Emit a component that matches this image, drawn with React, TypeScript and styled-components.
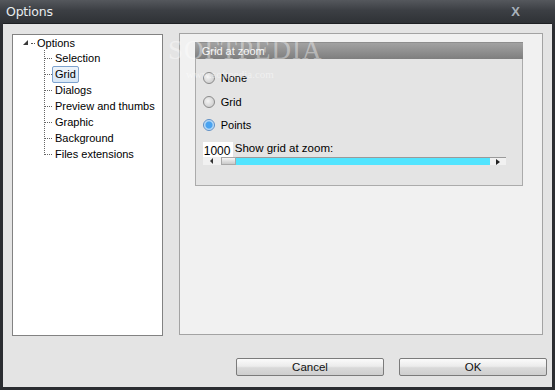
import styled, { createGlobalStyle } from "styled-components";

const Global = createGlobalStyle`
  html, body { margin: 0; padding: 0; }
  body { width: 555px; height: 390px; overflow: hidden; background: #2c2e32; }
`;

const Window = styled.div`
  position: relative;
  width: 555px;
  height: 390px;
  display: flex;
  flex-direction: column;
  background: linear-gradient(#3a3d42, #2b2d31 30px, #2b2d31);
  font-family: "Liberation Sans", Arial, sans-serif;
  font-size: 11px;
  color: #000;
  box-sizing: border-box;
`;

const TitleBar = styled.div`
  height: 23px;
  display: flex;
  align-items: center;
  justify-content: space-between;
  padding: 0 35px 1px 6px;
  background: linear-gradient(#55585d, #3c3f44 45%, #2f3236);
  box-sizing: border-box;
`;

const Title = styled.span`
  font-family: "DejaVu Sans", "Liberation Sans", sans-serif;
  font-size: 12.5px;
  color: #e8ecef;
  letter-spacing: -0.2px;
`;

const Close = styled.span`
  font-family: "Liberation Sans", Arial, sans-serif;
  font-weight: bold;
  font-size: 13px;
  color: #a9b2bb;
`;

const Body = styled.div`
  flex: 1;
  margin: 0 3px 3px 3px;
  background: #e4e4e4;
  border-top: 1px solid #1e2023;
  display: flex;
  flex-direction: column;
  padding: 9px 9px 0 9px;
  box-sizing: border-box;
`;

const Main = styled.div`
  display: flex;
  gap: 16px;
  align-items: flex-start;
`;

const Tree = styled.div`
  width: 151px;
  height: 302px;
  margin-top: 1px;
  background: #fff;
  border: 1px solid #828282;
  box-sizing: border-box;
  padding: 0 0 0 9px;
`;

const Root = styled.div`
  display: flex;
  align-items: center;
  height: 16px;
`;

const Expander = styled.span`
  width: 0;
  height: 0;
  border-left: 5px solid transparent;
  border-bottom: 5px solid #3a3a3a;
  margin: 0 3px 2px 1px;
`;

const Dot = styled.span`
  width: 4px;
  border-top: 1px dotted #555;
  margin-right: 2px;
`;

const Children = styled.div`
  margin-left: 22px;
  border-left: 1px dotted #666;
  height: 105px;
  margin-top: -1px;
`;

const Item = styled.div`
  display: flex;
  align-items: center;
  height: 16px;
`;

const Line = styled.span`
  width: 7px;
  border-top: 1px dotted #666;
`;

const Label = styled.span<{ $sel?: boolean }>`
  padding: 0 2px;
  height: 15px;
  line-height: 15px;
  border: 1px solid ${(p) => (p.$sel ? "#7da2ce" : "transparent")};
  border-radius: 2px;
  background: ${(p) => (p.$sel ? "linear-gradient(#eef4fb, #d6e6f6)" : "transparent")};
  white-space: nowrap;
`;

const Panel = styled.div`
  width: 365px;
  height: 302px;
  background: #f1f1f1;
  border: 1px solid #a3a3a3;
  box-sizing: border-box;
  padding: 8px 0 0 15px;
`;

const Group = styled.div`
  width: 328px;
  height: 144px;
  background: #e4e4e4;
  border: 1px solid #ababab;
  border-top: none;
  box-sizing: border-box;
  display: flex;
  flex-direction: column;
`;

const GroupHead = styled.div`
  height: 17px;
  margin: 0 -1px;
  padding-left: 7px;
  line-height: 17px;
  color: #f6f6f6;
  background: linear-gradient(#a2a2a2, #7e7e7e);
  border-top: 1px solid #8e8e8e;
  box-sizing: border-box;
`;

const Options = styled.div`
  display: flex;
  flex-direction: column;
  gap: 11.5px;
  padding: 13px 0 0 7px;
`;

const Radio = styled.label`
  display: flex;
  align-items: center;
  gap: 6px;
  height: 12px;
`;

const Circle = styled.span<{ $on?: boolean }>`
  width: 10px;
  height: 10px;
  border-radius: 50%;
  border: 1px solid ${(p) => (p.$on ? "#5d8fc6" : "#8a8a8a")};
  background: ${(p) =>
    p.$on
      ? "radial-gradient(circle, #4aa3f0 0 3px, #a9d3f7 4px, #e8f2fb 6px)"
      : "radial-gradient(circle at 40% 40%, #f4f4f4, #c4c4c4)"};
`;

const ZoomRow = styled.div`
  display: flex;
  align-items: flex-end;
  margin: 11px 0 0 7px;
  height: 16px;
`;

const Edit = styled.span`
  width: 30px;
  height: 16px;
  background: #fff;
  line-height: 18px;
  font-size: 12px;
  padding-left: 1px;
  box-sizing: border-box;
`;

const ZoomLabel = styled.span`
  font-size: 11.5px;
  margin: 0 0 4px 2px;
`;

const Slider = styled.div`
  display: flex;
  height: 8px;
  margin: -1px 0 0 7px;
  width: 303px;
`;

const Arrow = styled.span<{ $right?: boolean }>`
  width: ${(p) => (p.$right ? "16px" : "18px")};
  background: #f1f1f1;
  border-top: ${(p) => (p.$right ? "1px solid #9a9a9a" : "none")};
  display: flex;
  align-items: center;
  justify-content: center;
  &::after {
    content: "";
    border-top: 3px solid transparent;
    border-bottom: 3px solid transparent;
    ${(p) => (p.$right ? "border-left: 4px solid #222;" : "border-right: 3px solid #333;")}
  }
`;

const Thumb = styled.span`
  width: 15px;
  background: linear-gradient(#f7f7f7, #c9c9c9);
  border: 1px solid #a8a8a8;
  box-sizing: border-box;
`;

const Fill = styled.span`
  flex: 1;
  background: #52e4fe;
  border-top: 1px solid #9a9a9a;
`;

const Buttons = styled.div`
  display: flex;
  justify-content: flex-end;
  gap: 15px;
  margin: 22px -4px 0 0;
`;

const Button = styled.button`
  width: 148px;
  height: 18px;
  padding: 0;
  font-family: "Liberation Sans", Arial, sans-serif;
  font-size: 11.5px;
  color: #111;
  border: 1px solid #7b7b7b;
  border-radius: 2px;
  background: linear-gradient(#fbfbfb, #ececec 45%, #d9d9d9 55%, #cfcfcf);
`;

const Watermark = styled.div`
  position: absolute;
  left: 168px;
  top: 35px;
  font-family: "Liberation Serif", serif;
  font-size: 27px;
  letter-spacing: 1px;
  color: rgba(255, 255, 255, 0.4);
  pointer-events: none;
  & small {
    display: block;
    font-size: 11px;
    letter-spacing: 0;
    margin: 2px 0 0 18px;
    color: rgba(255, 255, 255, 0.45);
  }
`;

const items = ["Selection", "Grid", "Dialogs", "Preview and thumbs", "Graphic", "Background", "Files extensions"];

export default function App() {
  return (
    <>
      <Global />
      <Window>
        <TitleBar>
          <Title>Options</Title>
          <Close>X</Close>
        </TitleBar>
        <Body>
          <Main>
            <Tree>
              <Root>
                <Expander />
                <Dot />
                <span>Options</span>
              </Root>
              <Children>
                {items.map((t) => (
                  <Item key={t}>
                    <Line />
                    <Label $sel={t === "Grid"}>{t}</Label>
                  </Item>
                ))}
              </Children>
            </Tree>
            <Panel>
              <Group>
                <GroupHead>Grid at zoom</GroupHead>
                <Options>
                  <Radio>
                    <Circle />
                    None
                  </Radio>
                  <Radio>
                    <Circle />
                    Grid
                  </Radio>
                  <Radio>
                    <Circle $on />
                    Points
                  </Radio>
                </Options>
                <ZoomRow>
                  <Edit>1000</Edit>
                  <ZoomLabel>Show grid at zoom:</ZoomLabel>
                </ZoomRow>
                <Slider>
                  <Arrow />
                  <Thumb />
                  <Fill />
                  <Arrow $right />
                </Slider>
              </Group>
            </Panel>
          </Main>
          <Buttons>
            <Button>Cancel</Button>
            <Button>OK</Button>
          </Buttons>
        </Body>
        <Watermark>
          SOFTPEDIA
          <small>www.softpedia.com</small>
        </Watermark>
      </Window>
    </>
  );
}
